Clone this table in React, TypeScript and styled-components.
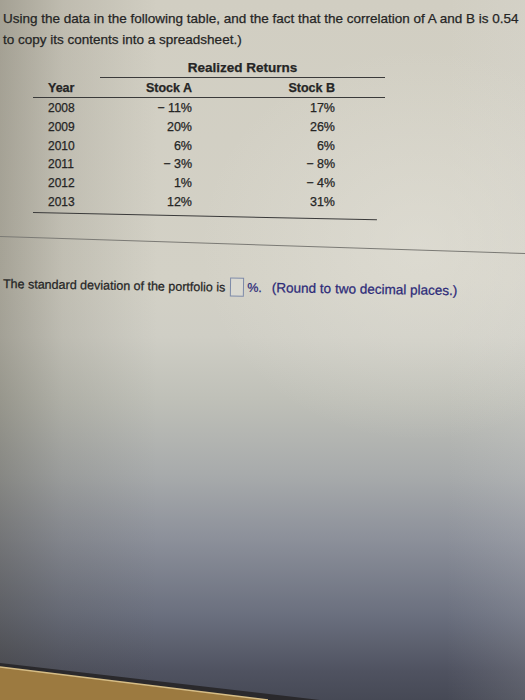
import React from "react";
import styled, { createGlobalStyle } from "styled-components";

const Global = createGlobalStyle`
  html, body { margin: 0; padding: 0; }
  body {
    width: 525px;
    height: 700px;
    overflow: hidden;
    font-family: "Liberation Sans", Arial, sans-serif;
  }
`;

const Screen = styled.div`
  position: relative;
  width: 525px;
  height: 700px;
  overflow: hidden;
  color: #252525;
  -webkit-text-stroke: 0.25px currentColor;
  background:
    radial-gradient(ellipse 60% 40% at 80% 35%, rgba(232, 230, 222, 0.45), rgba(232, 230, 222, 0) 70%),
    linear-gradient(90deg, rgba(60, 55, 40, 0.3) 0%, rgba(60, 55, 40, 0.12) 12%, rgba(60, 55, 40, 0) 30%),
    linear-gradient(270deg, rgba(230, 230, 230, 0.12) 0%, rgba(230, 230, 230, 0) 15%),
    linear-gradient(180deg, #d1cec2 0%, #d3d1c6 40%, #cfcec5 48%, #bfc0b8 57%, #a7aaab 68%, #8c909a 77%, #6a6f7e 88%, #4f5260 96%, #464955 100%);
`;

const Intro = styled.p`
  margin: 0;
  padding: 8px 0 0 3px;
  font-size: 13.5px;
  line-height: 21px;
  white-space: nowrap;
`;

const TableWrap = styled.div`
  margin: 8px 0 0 33px;
  width: 352px;
`;

const Caption = styled.div`
  margin-left: 67px;
  width: 285px;
  text-align: center;
  font-weight: bold;
  font-size: 13.5px;
  line-height: 16px;
  padding: 2px 0 1px;
  border-bottom: 1px solid #3a3a3a;
`;

const Row = styled.div<{ $head?: boolean }>`
  display: grid;
  grid-template-columns: 15px 60px 84px 143px;
  height: ${(p) => (p.$head ? "19px" : "18.7px")};
  align-items: center;
  font-size: 12.5px;
  font-weight: ${(p) => (p.$head ? "bold" : "normal")};
  border-bottom: ${(p) => (p.$head ? "1px solid #3a3a3a" : "none")};
  margin-bottom: ${(p) => (p.$head ? "1px" : "0")};
`;

const YearCell = styled.span<{ $head?: boolean }>`
  grid-column: 2;
  font-size: ${(p) => (p.$head ? "12.5px" : "12px")};
`;

const ValCell = styled.span`
  text-align: right;
`;

const TableEnd = styled.div`
  margin-top: 1px;
  width: 344px;
  border-top: 1px solid #3a3a3a;
  transform: rotate(1.2deg);
  transform-origin: left center;
`;

const Divider = styled.div`
  margin-top: 23px;
  width: 540px;
  height: 0;
  border-top: 1px solid #7b7a75;
  transform: rotate(1.85deg);
  transform-origin: left center;
`;

const Question = styled.p`
  margin: 37px 0 0 3px;
  font-size: 12.5px;
  line-height: 16px;
  white-space: nowrap;
  display: flex;
  align-items: center;
  transform: rotate(0.9deg);
  transform-origin: left center;
`;

const AnswerBox = styled.span`
  display: inline-block;
  width: 12px;
  height: 17px;
  margin: 0 3px 0 5px;
  border: 1px solid #7d8aa8;
  background: #dad9d1;
  -webkit-text-stroke: 0;
`;

const Hint = styled.span`
  color: #2c2a78;
  margin-left: 10px;
  font-size: 13.5px;
`;

const Pct = styled.span`
  color: #2c2a78;
`;

const Bezel = styled.svg`
  position: absolute;
  left: 0;
  bottom: 0;
`;

const rows: [string, string, string][] = [
  ["2008", "\u2212 11%", "17%"],
  ["2009", "20%", "26%"],
  ["2010", "6%", "6%"],
  ["2011", "\u2212 3%", "\u2212 8%"],
  ["2012", "1%", "\u2212 4%"],
  ["2013", "12%", "31%"],
];

export default function App() {
  return (
    <>
      <Global />
      <Screen>
        <Intro>
          Using the data in the following table, and the fact that the correlation of A and B is 0.54
          <br />
          to copy its contents into a spreadsheet.)
        </Intro>
        <TableWrap>
          <Caption>Realized Returns</Caption>
          <Row $head>
            <YearCell $head>Year</YearCell>
            <ValCell>Stock A</ValCell>
            <ValCell>Stock B</ValCell>
          </Row>
          {rows.map(([y, a, b]) => (
            <Row key={y}>
              <YearCell>{y}</YearCell>
              <ValCell>{a}</ValCell>
              <ValCell>{b}</ValCell>
            </Row>
          ))}
          <TableEnd />
        </TableWrap>
        <Divider />
        <Question>
          The standard deviation of the portfolio is
          <AnswerBox />
          <Pct>%.</Pct>
          <Hint>(Round to two decimal places.)</Hint>
        </Question>
        <Bezel width="525" height="40" viewBox="0 0 525 40">
          <polygon points="0,7 268,40 0,40" fill="#9c7a40" />
          <polygon points="0,3 320,40 268,40 0,7" fill="#2a292c" />
          <line x1="0" y1="7" x2="268" y2="40" stroke="#d6bd86" strokeWidth="1.5" />
        </Bezel>
      </Screen>
    </>
  );
}
